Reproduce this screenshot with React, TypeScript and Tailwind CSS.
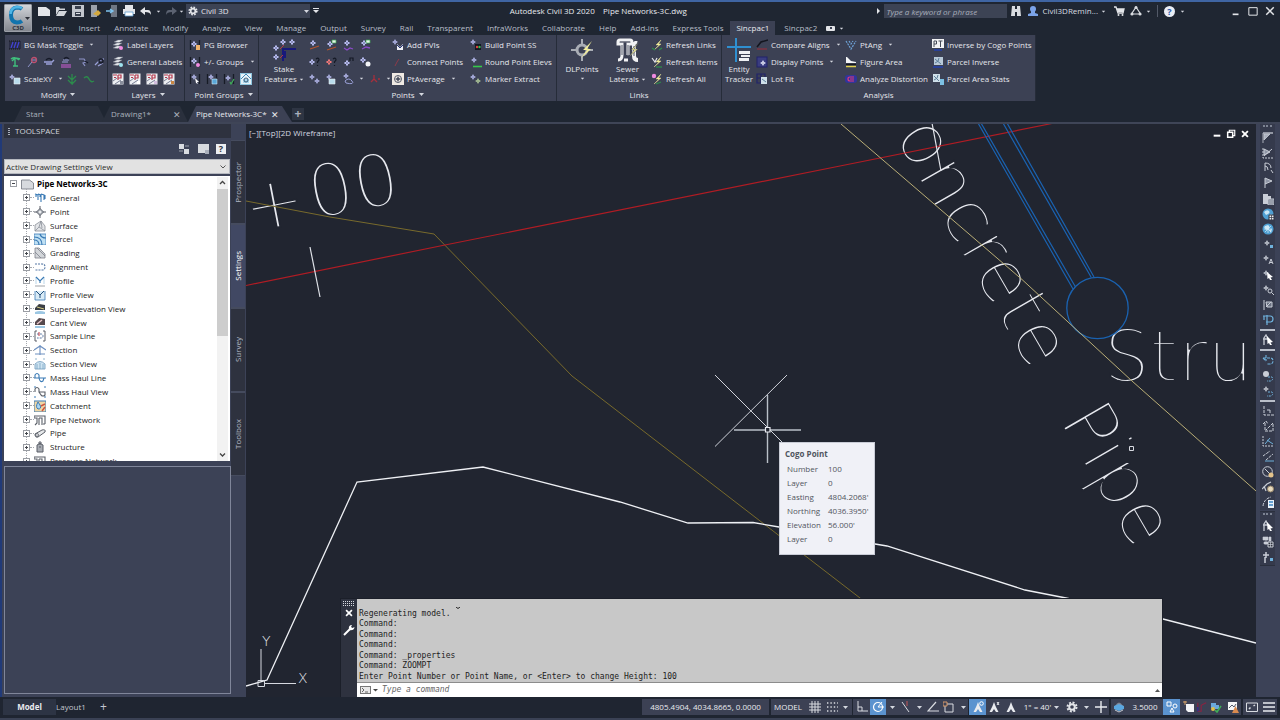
import type { ReactNode } from "react";

/* ---------- small drawing helpers ---------- */

function Icon({ children, className = "h-3 w-3" }: { children: ReactNode; className?: string }) {
  return (
    <svg viewBox="0 0 12 12" className={`shrink-0 ${className}`} fill="none" aria-hidden="true">
      {children}
    </svg>
  );
}

function Mark({ x, y, r = 2, c = "#b9bdf2" }: { x: number; y: number; r?: number; c?: string }) {
  return (
    <g stroke={c} strokeWidth="1">
      <path d={`M${x - r - 1} ${y}H${x + r + 1}M${x} ${y - r - 1}V${y + r + 1}`} />
      <path d={`M${x - r} ${y}L${x} ${y - r}L${x + r} ${y}L${x} ${y + r}Z`} fill={c} />
      <circle cx={x} cy={y} r={r / 3} fill="#3c4154" stroke="none" />
    </g>
  );
}

function Caret({ className = "" }: { className?: string }) {
  return (
    <svg viewBox="0 0 5 3" className={`h-[3px] w-[5px] shrink-0 ${className}`} aria-hidden="true">
      <path d="M0 0H5L2.5 3Z" fill="#d5d8e0" />
    </svg>
  );
}

const bolt = <path d="M10 1L5 6H8L3 11L10 5H7.500Z" fill="#f2ee9a" stroke="#f2ee9a" strokeWidth=".4" />;

/* ---------- ribbon ---------- */

type Item = { icon: ReactNode; label: string; menu?: boolean };

function RibbonButton({ icon, label, menu }: Item) {
  return (
    <button className="flex h-[17px] items-center gap-[3px] whitespace-nowrap">
      <Icon>{icon}</Icon>
      <span>{label}</span>
      {menu && <Caret className="ml-[3px] scale-75" />}
    </button>
  );
}

function IconButton({ label, children, className = "w-[17px]" }: { label: string; children: ReactNode; className?: string }) {
  return (
    <button aria-label={label} className={`flex h-[17px] items-center ${className}`}>
      <Icon>{children}</Icon>
    </button>
  );
}

function Column({ items, className = "" }: { items: Item[]; className?: string }) {
  return (
    <div className={`flex flex-col ${className}`}>
      {items.map((i) => (
        <RibbonButton key={i.label} {...i} />
      ))}
    </div>
  );
}

function Panel({ title, menu, className, children }: { title: string; menu?: boolean; className: string; children: ReactNode }) {
  return (
    <section className={`flex shrink-0 flex-col border-r border-[#262c39] bg-[#3c4154] ${className}`}>
      <div className="flex h-[53px] pt-[1px]">{children}</div>
      <button className="flex h-[13px] items-center justify-center gap-1">
        {title}
        {menu && <Caret />}
      </button>
    </section>
  );
}

function BigButton({ icon, lines, menu, className }: { icon: ReactNode; lines: string[]; menu?: boolean; className: string }) {
  return (
    <button className={`flex flex-col items-center pt-[2px] leading-[10px] ${className}`}>
      <svg viewBox="0 0 24 24" className="mb-[2px] h-6 w-6" fill="none" aria-hidden="true">
        {icon}
      </svg>
      {lines.map((l, i) => (
        <span key={l} className="flex items-center gap-[2px] whitespace-nowrap">
          {l}
          {menu && i === lines.length - 1 && lines.length > 1 && <Caret className="scale-75" />}
        </span>
      ))}
      {menu && lines.length === 1 && <Caret className="mt-[3px] scale-75" />}
    </button>
  );
}

const layerStack = (
  <path d="M2 3L6 1H11L7 3.500ZM1 6L5 4H10L6 6.500ZM1 9L5 7H9L6 9.500Z" fill="#e6e8ec" stroke="#7b8291" strokeWidth=".4" />
);

const layerSquare = (accent: string, corner: string) => (
  <>
    <rect x=".5" y=".5" width="11" height="11" fill="#eceef2" />
    <path d="M1 2H5M2 4.500H4M6 2V7M6 2H9V5H6" stroke={accent} strokeWidth="1.200" />
    <path d="M1 8L5 5M3 11L9 7" stroke="#59617a" strokeWidth=".8" />
    <path d="M8 8H11V11H8Z" fill={corner} />
  </>
);

const brackets = <path d="M1.500 1V11M10.500 1V11" stroke="#171b26" strokeWidth="1.300" />;

const modifyTools: [string, ReactNode][] = [
  ["Palm", <path key="a" d="M2 3Q6 0 10 4M3 5Q6 1 11 3M6 3V10M4 10H9" stroke="#3fbf7c" strokeWidth="1.400" />],
  ["Leader", <g key="a"><circle cx="8" cy="4" r="2.500" stroke="#c0506f" strokeWidth="1.300" /><path d="M6 6L2 11M6 4H10" stroke="#8d93c8" /></g>],
  ["Flip", <g key="a"><path d="M1 6H9L11 4M3 8H9" stroke="#9aa0d8" strokeWidth="1.300" /><path d="M3 4Q6 1 9 4" stroke="#161a28" strokeWidth="1.500" /></g>],
  ["Stack", <g key="a"><path d="M3 4H9M2 6H8" stroke="#9aa0d8" /><path d="M4 3Q6 0 9 3" stroke="#161a28" strokeWidth="1.500" /><path d="M1 9H11M1 11H11" stroke="#d05fd8" strokeWidth="1.200" /></g>],
  ["Shift", <g key="a"><path d="M2 3H7L9 6L6 7L8 10" stroke="#8d93c8" strokeWidth="1.200" /><path d="M8 5L11 7" stroke="#161a28" strokeWidth="1.500" /></g>],
  ["Rotate", <g key="a"><path d="M1 9L6 4L10 3M4 10L9 7" stroke="#9aa0d8" strokeWidth="1.300" /><circle cx="7" cy="5" r="2" stroke="#161a28" strokeWidth="1.300" /></g>],
];

const pointTools: [string, ReactNode][] = [
  ["Point on line", <g key="a"><Mark x={5} y={4} /><path d="M2 10L11 7" stroke="#b4552d" strokeWidth="1.300" /></g>],
  ["Point on layer", <g key="a"><Mark x={5} y={5} /><path d="M2 11L11 8" stroke="#b4552d" strokeWidth="1.300" /><path d="M7 1H11V4H7Z" fill="#e7f4e8" stroke="#3fae58" strokeWidth=".7" /></g>],
  ["Point offset", <g key="a"><Mark x={5} y={4} /><path d="M2 9L5 11L8 9L11 10" stroke="#8c4bc9" strokeWidth="1.300" /></g>],
  ["Point label", <g key="a"><Mark x={5} y={4} /><path d="M3 10L7 8L11 9" stroke="#8c4bc9" strokeWidth="1.300" /><path d="M7 1H11V4H7Z" fill="#e7f4e8" stroke="#3fae58" strokeWidth=".7" /></g>],
  ["Query", <g key="a"><Mark x={4} y={6} /><path d="M8 3Q11 1 11 4L9.500 6V7M9.500 9V10" stroke="#151925" strokeWidth="1.200" /></g>],
  ["Query red", <g key="a"><Mark x={4} y={6} c="#f07878" /><path d="M8 3Q11 1 11 4L9.500 6V7M9.500 9V10" stroke="#151925" strokeWidth="1.200" /></g>],
  ["Number", <g key="a"><Mark x={5} y={7} /><path d="M8 5V2H11V5" stroke="#151925" strokeWidth="1.200" /></g>],
  ["Pair", <g key="a"><Mark x={4} y={4} /><circle cx="9" cy="8" r="2.500" fill="#f2f3f6" /></g>],
  ["Chain", <g key="a"><Mark x={4} y={4} r={1.5} /><Mark x={9} y={8} r={1.5} /></g>],
  ["Table", <g key="a"><Mark x={4} y={4} r={1.5} /><path d="M4 6H10V11H4Z" fill="#b9dcec" stroke="#e8eef2" strokeWidth=".6" /></g>],
  ["Group", <g key="a"><Mark x={4} y={3} r={1.5} /><path d="M3 8Q7 4 10 8T4 10Z" stroke="#9aa0d8" /></g>],
];

const Ribbon = () => (
  <div className="ml-[5px] flex h-[66px] text-[#e4e6eb]">
    <Panel title="Modify" menu className="w-[103px] pl-[4px]">
      <div className="flex flex-col">
        <RibbonButton label="BG Mask Toggle" menu icon={<><path d="M0 2H12V10H0Z" fill="#2a2e44" /><path d="M2 9L4 3M5 9L7 3M8 9L10 3" stroke="#4343d8" strokeWidth="1.200" /><path d="M0 2H12M0 10H12" stroke="#14161f" strokeDasharray="1 1" /></>} />
        <div className="flex">
          {modifyTools.map(([n, d]) => (
            <IconButton key={n} label={n}>{d}</IconButton>
          ))}
        </div>
        <div className="flex">
          <RibbonButton label="ScaleXY" menu icon={<><Mark x={3} y={4} r={1.5} /><path d="M5 5H11V11H5Z" fill="#b9dcec" stroke="#e8eef2" strokeWidth=".6" /></>} />
          <IconButton label="Branches" className="ml-[3px] w-[17px]"><path d="M6 1V11L2 7M6 11L10 7M6 7L2 3M6 7L10 3" stroke="#2c8b4c" strokeWidth="1.300" /></IconButton>
          <IconButton label="Smooth" className="w-3"><path d="M1 5Q4 2 6 6T11 8" stroke="#2c8b4c" strokeWidth="1.500" /></IconButton>
        </div>
      </div>
    </Panel>

    <Panel title="Layers" menu className="w-[77px] pl-[4px]">
      <div className="flex flex-col">
        <RibbonButton label="Label Layers" icon={<>{layerStack}<circle cx="9" cy="9" r="2" fill="#f08be0" /></>} />
        <RibbonButton label="General Labels" icon={<>{layerStack}<circle cx="9" cy="9" r="2" fill="#9fe3ef" /></>} />
        <div className="flex">
          <IconButton label="Layer freeze">{layerSquare("#b3364a", "#8a8f9d")}</IconButton>
          <IconButton label="Layer PT">{layerSquare("#b3364a", "#fff")}</IconButton>
          <IconButton label="Layer lock">{layerSquare("#b3364a", "#d3bfe0")}</IconButton>
          <IconButton label="Layer paint">{layerSquare("#b3364a", "#c98642")}</IconButton>
        </div>
      </div>
    </Panel>

    <Panel title="Point Groups" menu className="w-[74px] pl-[4px]">
      <div className="flex flex-col">
        <RibbonButton label="PG Browser" icon={<>{brackets}<Mark x={5} y={5} /><path d="M7 6H11V11H7Z" fill="#f1b36c" /></>} />
        <RibbonButton label="+/- Groups" menu icon={<>{brackets}<Mark x={5} y={5} /><circle cx="9" cy="9" r="2" fill="#f08be0" /></>} />
        <div className="flex">
          <IconButton label="Pick group">{brackets}<Mark x={5} y={4} r={1.5} /><path d="M6 5L10 9L8 9L9 11L7 10Z" fill="#fff" /></IconButton>
          <IconButton label="Group table">{brackets}<Mark x={5} y={4} r={1.5} /><path d="M6 6H11V11H6Z" fill="#5aa7d8" stroke="#cfe8f5" strokeWidth=".6" /></IconButton>
          <IconButton label="Group check">{brackets}<Mark x={5} y={5} r={1.5} /><path d="M7 9L8 11L11 6" stroke="#3fae58" strokeWidth="1.200" /></IconButton>
          <IconButton label="Group home"><rect x=".5" y=".5" width="11" height="11" fill="#e6f2f8" stroke="#8fc6e0" /><path d="M1 6L6 1L11 6" stroke="#3f86b4" /><path d="M3 6H9V10H3Z" fill="#a9d6ee" /><circle cx="6" cy="7" r="2" stroke="#2b4c66" strokeWidth=".9" /></IconButton>
        </div>
      </div>
    </Panel>

    <Panel title="Points" menu className="w-[298px]">
      <BigButton
        className="ml-[3px] w-[44px]"
        menu
        lines={["Stake", "Features"]}
        icon={<><path d="M11 23V11H24M13 13V20" stroke="#18197a" strokeWidth="2" /><Mark x={11} y={4} /><Mark x={20} y={4} /><Mark x={4} y={10} /><Mark x={4} y={19} /><path d="M8 11L12 7M8 20L11 17" stroke="#b3364a" /></>}
      />
      <div className="ml-[2px] grid w-[84px] grid-cols-[17px_17px_17px_17px] content-start">
        {pointTools.map(([n, d]) => (
          <IconButton key={n} label={n}>{d}</IconButton>
        ))}
        <div className="flex items-center gap-[5px]">
          <Caret className="scale-75" />
          <Icon><path d="M5 2V6M2 9L5 6L8 9M9 6H11" stroke="#a62f3c" strokeWidth="1.300" /></Icon>
          <Caret className="scale-75" />
        </div>
      </div>
      <Column
        className="w-[78px]"
        items={[
          { label: "Add PVIs", icon: <><Mark x={3} y={3} r={1.5} /><path d="M5 5L8 8L11 5V11H5Z" fill="#eef0f6" /><path d="M5 6L8 9L11 6" stroke="#26337a" /></> },
          { label: "Connect Points", icon: <><path d="M3 10L5 6L7 3" stroke="#8f3a48" strokeWidth="1" /></> },
          { label: "PtAverage", menu: true, icon: <><rect width="12" height="12" fill="#efe9e3" /><circle cx="6" cy="6" r="3.500" stroke="#555b6b" /><Mark x={6} y={6} r={1.5} c="#4c5160" /></> },
        ]}
      />
      <Column
        items={[
          { label: "Build Point SS", icon: <><Mark x={3} y={3} r={1.5} /><path d="M5 5H11V11H5Z" fill="#131722" /><circle cx="7" cy="8" r="1.200" fill="#e0453f" /><circle cx="9.500" cy="8" r="1.200" fill="#37c24e" /></> },
          { label: "Round Point Elevs", icon: <><Mark x={4} y={4} r={1.5} /><path d="M3 10.500H12" stroke="#35c84b" strokeWidth="1.600" /></> },
          { label: "Marker Extract", icon: <><Mark x={3} y={4} r={1.5} /><Mark x={8} y={8} r={1.5} c="#b5cf9f" /></> },
        ]}
      />
    </Panel>

    <Panel title="Links" className="w-[165px]">
      <BigButton
        className="ml-[3px] w-[44px]"
        menu
        lines={["DLPoints"]}
        icon={<><path d="M1 12H23M12 1V23" stroke="#a9adb5" strokeWidth="2" /><circle cx="12" cy="12" r="5" fill="#3c4154" stroke="#a9adb5" strokeWidth="3" /><path d="M22 3L13 12H17L11 20L21 11H17Z" fill="#f2ee9a" /></>}
      />
      <BigButton
        className="w-[47px]"
        menu
        lines={["Sewer", "Laterals"]}
        icon={<><path d="M2 4Q2 2 4 2H14Q16 2 16 4V6H12V17M2 4V6H6V17Q6 22 2 22M8 22H12M16 6Q20 6 20 3" stroke="#f1f2f4" strokeWidth="3" /><path d="M18 7V18Q18 22 22 22" stroke="#f1f2f4" strokeWidth="4" /><path d="M4 4H14M6 7V17M12 7V18M18 8V18" stroke="#6e737f" strokeWidth="1.200" /><path d="M23 4L15 12H18L13 19L22 11H18Z" fill="#f2ee9a" stroke="#3c4154" strokeWidth=".5" /></>}
      />
      <Column
        items={[
          { label: "Refresh Links", icon: <>{bolt}<path d="M1 9L4 11M8 11L11 9" stroke="#2c8b4c" strokeWidth="1.300" /></> },
          { label: "Refresh Items", icon: <>{bolt}<path d="M1 2L4 6L6 2" stroke="#e6e8ec" strokeWidth="1.200" /><path d="M5 11H11" stroke="#2c8b4c" strokeWidth="1.300" /></> },
          { label: "Refresh All", icon: <>{bolt}<circle cx="3" cy="3" r="2.200" fill="#f08be0" /><path d="M5 11L10 9" stroke="#2c8b4c" strokeWidth="1.300" /></> },
        ]}
      />
    </Panel>

    <Panel title="Analysis" className="w-[314px]">
      <BigButton
        className="w-[34px]"
        lines={["Entity", "Tracker"]}
        icon={<><path d="M0 9H24M9 0V24" stroke="#2f8fd0" strokeWidth="2" /><path d="M12 12H23V24H12Z" fill="#3c4154" /><path d="M12 13H23V16H12ZM14 17H23V19H14ZM12 20H22V23H12Z" fill="#eef0f3" /></>}
      />
      <Column
        className="w-[89px]"
        items={[
          { label: "Compare Aligns", menu: true, icon: <><path d="M1 8L5 3L12 1" stroke="#14161f" strokeWidth="1.600" /><path d="M1 10H11" stroke="#7a3443" strokeWidth="1.600" /></> },
          { label: "Display Points", menu: true, icon: <><rect x="1" y="1" width="10" height="10" fill="#3a3d80" stroke="#20236a" /><Mark x={7} y={7} r={1.5} c="#e8eaff" /></> },
          { label: "Lot Fit", icon: <><path d="M1 1H9V10H1ZM1 5H9M5 1V10" stroke="#20236a" strokeWidth="1.200" /><path d="M5 4H11V11H5Z" fill="#cfe0ea" /><path d="M6 6L10 9" stroke="#5c7f99" /></> },
        ]}
      />
      <Column
        className="w-[87px]"
        items={[
          { label: "PtAng", menu: true, icon: <path d="M1 2L6 10L11 2M4 2L6 5L8 2" stroke="#6ea3d8" strokeWidth="1.200" strokeDasharray="2 1" /> },
          { label: "Figure Area", icon: <><path d="M2 1L6 5L11 6V7H1V1Z" fill="#f4f5f7" /><path d="M1 8.500H11" stroke="#14161f" strokeWidth="1.500" /><path d="M1 10.500H11" stroke="#e3d34f" strokeWidth="1.500" /></> },
          { label: "Analyze Distortion", icon: <><rect x="0" y="2" width="12" height="8" rx="3" fill="#31349c" /><path d="M9 4H5Q3 4 3 6T5 8H9M5 6H9" stroke="#e0387c" strokeWidth="1.200" /></> },
        ]}
      />
      <Column
        items={[
          { label: "Inverse by Cogo Points", icon: <><rect y="0" width="12" height="9" fill="#f2f3f5" /><path d="M2 8V2H4.500V5H2M6.500 2H10.500M8.500 2V8" stroke="#444a58" /><path d="M2 11H10" stroke="#2440a8" strokeWidth="1.600" /></> },
          { label: "Parcel Inverse", icon: <><rect x="2" y="1" width="9" height="8" fill="#b8c9d8" /><path d="M3 3L9 8M3 7Q7 6 7 2" stroke="#5c7f99" /><path d="M1 11H11" stroke="#2440a8" strokeWidth="1.600" /></> },
          { label: "Parcel Area Stats", icon: <><rect x="1" y="1" width="7" height="8" fill="#cfe0ea" /><path d="M2 3L7 8M2 7Q6 6 6 2" stroke="#5c7f99" /><rect x="8" y="6" width="4" height="6" fill="#7cc0e4" /></> },
        ]}
      />
    </Panel>
  </div>
);

/* ---------- title bar and menu ---------- */

const quickAccess: [string, ReactNode][] = [
  ["New", <path key="a" d="M0 2H8L12 5V11H0Z" fill="#e3e5e9" />],
  ["Open", <path key="a" d="M1 2H4L5 3.500H10V5H4L1 10ZM4 6H12L9 11H1Z" fill="#d3d6db" />],
  ["Save", <g key="a"><path d="M0 0H12V12H0Z" fill="#c3c7ce" /><path d="M3 1H9V4H3ZM3 7H9V11H3Z" fill="#39404e" /><path d="M4 8.500H8" stroke="#dfe2e6" /></g>],
  ["Save as", <g key="a"><path d="M2 0H8V12H2Z" fill="#9ba1ab" /><path d="M4 9L9 5L12 8L9 11Z" fill="#d4a93f" /></g>],
  ["Export", <g key="a"><path d="M5 0H11V12H5Z" fill="#6f7784" /><path d="M0 6H6M4 4L7 6L4 8" stroke="#7fc4ef" strokeWidth="1.400" /></g>],
  ["Plot", <g key="a"><path d="M2 0H10V4H2ZM0 4H12V9H0Z" fill="#e3e5e9" /><path d="M2 7H10V11H2Z" fill="#fff" stroke="#5f9fd0" strokeWidth=".8" /></g>],
];

const menuTabs = ["Home", "Insert", "Annotate", "Modify", "Analyze", "View", "Manage", "Output", "Survey", "Rail", "Transparent", "InfraWorks", "Collaborate", "Help", "Add-ins", "Express Tools", "Sincpac1", "Sincpac2"];

const Gear = ({ className = "h-3 w-3" }: { className?: string }) => (
  <Icon className={className}>
    <circle cx="6" cy="6" r="4.500" stroke="#e3e5e9" strokeWidth="2" strokeDasharray="2 1.530" />
    <circle cx="6" cy="6" r="2.800" stroke="#e3e5e9" strokeWidth="2" />
  </Icon>
);

const Header = () => (
  <header className="flex h-[33px] shrink-0 pl-1">
    <button aria-label="Application menu" className="mt-[2px] flex h-7 w-7 shrink-0 flex-col items-center justify-between rounded-[1px] border border-[#9a9ea6] bg-linear-to-b from-[#d2d5da] to-[#83878f]">
      <svg viewBox="0 0 26 20" className="h-5 w-[26px]" fill="none" aria-hidden="true">
        <path d="M17 4Q15 2.500 12 2.500Q6 3 6 10Q6 17 12 17.500Q15 17.500 17 16" stroke="#1274ad" strokeWidth="4" />
        <path d="M17 3Q15 2 12 2Q6 2.500 5.500 9" stroke="#4fb6e6" strokeWidth="2.500" />
        <path d="M20 12H25L22.500 15Z" fill="#2b2f38" />
      </svg>
      <span className="text-[6px] leading-[6px] font-bold text-[#2b2f38]">C3D</span>
    </button>
    <div className="flex min-w-0 flex-1 flex-col">
      <div className="flex h-[18px] items-center">
        <div className="flex w-[122px] shrink-0 items-center gap-[5px] pl-[6px]">
          {quickAccess.map(([n, d]) => (
            <button key={n} aria-label={n}><Icon>{d}</Icon></button>
          ))}
          <button aria-label="Undo"><Icon><path d="M0 6L5 2V5H8Q11 5 11 10Q10 7 5 7V10Z" fill="#e3e5e9" /></Icon></button>
        </div>
        <Caret className="mx-[2px] scale-75" />
        <button aria-label="Redo" className="ml-[2px]"><Icon><path d="M12 6L7 2V5H4Q1 5 1 10Q2 7 7 7V10Z" fill="#5b6271" /></Icon></button>
        <Caret className="mx-[2px] scale-75" />
        <label className="relative flex h-[14px] w-[124px] shrink-0 items-center bg-[#3c4354]">
          <Gear className="ml-[2px] h-[10px] w-[10px]" />
          <select aria-label="Workspace" className="h-full min-w-0 flex-1 appearance-none pl-[3px] text-[#e4e6eb]">
            <option>Civil 3D</option>
          </select>
          <Caret className="mr-[1px]" />
        </label>
        <svg viewBox="0 0 6 6" className="ml-[3px] h-[6px] w-[6px]" aria-hidden="true"><path d="M0 0H6V1H0ZM0 2H6L3 5Z" fill="#e3e5e9" /></svg>
        <h1 className="min-w-0 flex-1 text-center whitespace-pre text-[#e9ebef]">{"Autodesk Civil 3D 2020    Pipe Networks-3C.dwg"}</h1>
        <div className="flex shrink-0 items-center">
          <svg viewBox="0 0 3 6" className="mr-1 h-[6px] w-[3px]" aria-hidden="true"><path d="M0 0V6L3 3Z" fill="#e3e5e9" /></svg>
          <input aria-label="Search" placeholder="Type a keyword or phrase" className="h-[14px] w-[123px] bg-[#3c4354] px-[2px] italic placeholder:text-[#a9afbc]" />
          <button aria-label="Find" className="ml-[3px]"><Icon><path d="M2 1H5V4H7V1H10L11 11H7V7H5V11H1Z" fill="#d9dce1" /></Icon></button>
          <button className="ml-[5px] flex items-center gap-[3px]">
            <Icon><circle cx="6" cy="4" r="3" fill="#7ba3e8" /><path d="M4 5H8V8L11 9V11H1V9L4 8Z" fill="#7ba3e8" /></Icon>
            Civil3DRemin...
            <Caret className="scale-75" />
          </button>
          <button aria-label="Store" className="ml-[7px]"><Icon><path d="M1 2H3L5 8H10L11 4H4" stroke="#e3e5e9" strokeWidth="1.300" /><path d="M4 4H11L10 7H5Z" fill="#e3e5e9" /><circle cx="5.500" cy="10" r="1" fill="#e3e5e9" /><circle cx="9.500" cy="10" r="1" fill="#e3e5e9" /></Icon></button>
          <button className="ml-[5px] flex items-center gap-1" aria-label="Apps"><Icon><path d="M6 2L10.500 9H1.500Z" stroke="#d9dce1" strokeWidth="1.200" /><circle cx="6" cy="2.500" r="1.500" fill="#d9dce1" /><circle cx="2" cy="9" r="1.500" fill="#d9dce1" /><circle cx="10" cy="9" r="1.500" fill="#d9dce1" /></Icon><Caret className="scale-75" /></button>
          <span className="mx-[6px] h-3 w-px bg-[#525968]" />
          <button aria-label="Help" className="flex items-center gap-[5px]"><span className="flex h-[11px] w-[11px] items-center justify-center rounded-full bg-[#e9edf5] text-[9px] leading-none font-bold text-[#2857a8]">?</span><Caret className="scale-75" /></button>
        </div>
        <div className="ml-[46px] flex shrink-0 items-center gap-[7px] pr-[5px]">
          <button aria-label="Minimize"><Icon className="h-[10px] w-[10px]"><path d="M2 10H9" stroke="#e3e5e9" strokeWidth="2" /></Icon></button>
          <button aria-label="Maximize"><Icon className="h-[10px] w-[10px]"><path d="M1 2H11V11H1Z" stroke="#e3e5e9" strokeWidth="1.200" /></Icon></button>
          <button aria-label="Close"><Icon className="h-[10px] w-[10px]"><path d="M1.500 1.500L10.500 10.500M10.500 1.500L1.500 10.500" stroke="#e3e5e9" strokeWidth="1.800" /></Icon></button>
        </div>
      </div>
      <nav className="flex h-[15px] items-end pl-[3px] text-[#b9bec9]">
        {menuTabs.map((t) => (
          <a key={t} href="#" className={`flex h-[14px] items-center whitespace-nowrap ${t === "Sincpac1" ? "bg-[#3c4154] px-[6px] text-[#e9ebef]" : t === "Sincpac2" ? "px-[9px]" : "px-[7px]"}`}>
            {t}
          </a>
        ))}
        <button aria-label="Ribbon options" className="flex h-[14px] items-center gap-1"><span className="flex h-[5px] w-[9px] items-center justify-center rounded-[1px] bg-[#e3e5e9]"><span className="h-[2px] w-[2px] bg-[#3c4154]" /></span><Caret className="scale-75" /></button>
      </nav>
    </div>
  </header>
);

const FileTabs = () => (
  <div className="flex h-[21px] shrink-0 items-end pl-[14px] text-[#aab0bc]">
    <a href="#" className="flex h-4 w-[92px] items-center bg-[#2a303d] pl-[12px] [clip-path:polygon(8px_0,84px_0,92px_100%,0_100%)]">Start</a>
    <div className="-ml-[4px] flex h-4 w-[86px] items-center justify-between bg-[#2a303d] pr-2 pl-[9px] [clip-path:polygon(8px_0,78px_0,86px_100%,0_100%)]">
      <a href="#">Drawing1*</a>
      <button aria-label="Close Drawing1" className="-mr-[1px] text-[9px] leading-none">✕</button>
    </div>
    <div className="flex h-4 w-[104px] items-center justify-between bg-[#3c4154] pr-[14px] pl-2 text-[#e9ebef] [clip-path:polygon(8px_0,94px_0,104px_100%,0_100%)]">
      <a href="#">Pipe Networks-3C*</a>
      <button aria-label="Close Pipe Networks-3C" className="-mr-[1px] text-[9px] leading-none">✕</button>
    </div>
    <button aria-label="New drawing" className="mb-[2px] flex h-3 w-3 items-center justify-center bg-[#2e3543] text-[12px] leading-none font-bold">+</button>
  </div>
);

/* ---------- toolspace ---------- */

const g = "#5a5f68";
const b = "#3a7ab5";
const tree: [string, ReactNode][] = [
  ["General", <path key="a" d="M1 2L4 3V8M4 2L7 3V10M7 2L10 3V8M2 5V3M6 5V3M11 3V7" stroke={b} strokeWidth="1.100" />],
  ["Point", <g key="a"><path d="M6 0V12M0 6H12" stroke={g} /><path d="M6 2.500L9.500 6L6 9.500L2.500 6Z" fill="#b7bbc2" stroke={g} /><circle cx="6" cy="6" r="1" fill="#fff" /></g>],
  ["Surface", <path key="a" d="M1 5L7 1L11 6V11H1ZM7 1L5 7L1 11M5 7L11 11M7 1L8 8" fill="#e3e5e8" stroke="#8a8f98" strokeWidth=".8" />],
  ["Parcel", <g key="a"><path d="M0 1H12V12H0Z" fill="#bfe0f3" stroke={b} strokeWidth=".8" /><path d="M0 4Q8 4 8 12M0 7Q5 7 5 12M12 5Q7 5 6 1" stroke={b} strokeWidth="1.200" /></g>],
  ["Grading", <path key="a" d="M1 1L5 1L11 7V11H1ZM1 5L7 11M3 1L11 9" fill="#d3d6da" stroke="#7d828b" strokeWidth=".8" />],
  ["Alignment", <path key="a" d="M1 3H8Q11 3 11 6T8 9H1" stroke="#5679a5" strokeWidth="1.100" strokeDasharray="2 1" />],
  ["Profile", <g key="a"><path d="M1 11H11" stroke="#a0a4aa" /><path d="M2 2V9M10 2V9" stroke="#b9d6ea" /><path d="M2 2L6 6L10 2M6 6V8" stroke={b} strokeWidth="1.200" /></g>],
  ["Profile View", <g key="a"><path d="M1 2V11H11V2" fill="#d9ebf6" stroke={b} strokeWidth=".8" /><path d="M2 2L6 6L10 2M6 6V9" stroke="#23507c" /></g>],
  ["Superelevation View", <g key="a"><path d="M1 5L5 1L11 2V7H1Z" fill="#3b3f45" /><path d="M1 9Q6 7 11 9V11H1Z" fill="#9cc7e3" /><path d="M3 4L10 6" stroke="#d6cd84" /></g>],
  ["Cant View", <g key="a"><path d="M1 5L5 1L11 2V8H1Z" fill="#55494d" /><path d="M3 7L8 3" stroke="#eac8cb" strokeWidth="1.400" /><path d="M1 10H11" stroke="#9cc7e3" strokeWidth="2" /></g>],
  ["Sample Line", <g key="a"><path d="M3 1H1V11H3M9 1H11V11H9" stroke={g} /><path d="M3 4H7Q9 4 9 6T7 8H3" stroke="#5a78a4" strokeDasharray="2 1" /><path d="M5 2V6" stroke="#c23b46" /></g>],
  ["Section", <path key="a" d="M0 6L6 2L12 6M6 1V11M1 10H11" stroke="#6c8fc0" strokeWidth="1.100" />],
  ["Section View", <g key="a"><path d="M1 11V6Q6 1 11 6V11Z" fill="#cfe4f2" stroke="#7aa3c2" strokeWidth=".9" /><path d="M1 1H3M9 1H11M3 11V6M6 11V5M9 11V6" stroke="#7aa3c2" strokeWidth=".8" /></g>],
  ["Mass Haul Line", <path key="a" d="M0 6H12M1 6V3Q3 0 5 3V6Q6 11 9 9L10 6" stroke={b} strokeWidth="1.100" />],
  ["Mass Haul View", <g key="a"><path d="M0 1H2M10 1H12M0 11H2M10 11H12" stroke={b} /><path d="M1 6V3Q3 0 5 3V6H11V9Q9 11 7 9L5 6" stroke={g} strokeWidth="1.100" /></g>],
  ["Catchment", <g key="a"><path d="M0 1H12V12H0Z" fill="#f0d7a5" stroke={b} /><path d="M4 2Q1 7 4 9Q8 9 6 5Z" fill="#a9d6f3" stroke={b} /><path d="M7 6L11 4M8 11L11 7" stroke="#cf5640" strokeWidth="1.500" /></g>],
  ["Pipe Network", <path key="a" d="M0 2H11V10M0 2V4H3V9L1 11M5 4V11M5 4H8V11M11 10H9" stroke={g} strokeWidth="1.100" />],
  ["Pipe", <g key="a"><path d="M1 7L8 3Q12 2 11 5L4 10Q1 11 1 7Z" fill="#e6e8ea" stroke={g} /><circle cx="3" cy="8" r="1.500" stroke={g} strokeWidth=".8" /></g>],
  ["Structure", <g key="a"><path d="M3 4Q6 1 9 4V11H3Z" fill="#a7abb2" stroke={g} /><path d="M5 1H7V3H5ZM5 6H7" stroke={g} /></g>],
  ["Pressure Network", <path key="a" d="M0 2H11V10M0 2V4H3V9M5 4V11M5 4H8V11" stroke={g} strokeWidth="1.100" />],
];

const Expander = ({ open }: { open?: boolean }) => (
  <svg viewBox="0 0 7 7" className="h-[7px] w-[7px] shrink-0" fill="none" aria-hidden="true">
    <rect x=".5" y=".5" width="6" height="6" fill="#fff" stroke="#9a9da3" />
    <path d={open ? "M2 3.500H5" : "M2 3.500H5M3.500 2V5"} stroke="#44474d" />
  </svg>
);

const Toolspace = () => (
  <aside className="flex w-[242px] shrink-0 bg-[#3c4257]">
    <div className="flex min-w-0 flex-1 flex-col pb-[3px]">
      <div className="flex h-[14px] w-[227px] shrink-0 items-center gap-[5px] bg-[#2e323f] pl-[4px] text-[#d3d6dd]">
        <svg viewBox="0 0 2 7" className="h-[7px] w-[2px]" fill="none" aria-hidden="true"><path d="M1 0V7" stroke="#aab0bc" strokeWidth="2" strokeDasharray="1 1" /></svg>
        TOOLSPACE
      </div>
      <div className="flex h-[21px] shrink-0 items-center justify-end gap-[7px] pr-[5px]">
        <button aria-label="Panorama"><Icon><path d="M1 1H6V6H1ZM6 6H11V11H6Z" fill="#d9dce1" /><path d="M1 8H5M7 3H11" stroke="#9aa0ac" /></Icon></button>
        <button aria-label="Preview"><Icon><path d="M1 1H12V10H1Z" fill="#d9dce1" /><path d="M8 7H12V11H8Z" fill="#aab0bc" /></Icon></button>
        <button aria-label="Toolspace help" className="flex h-[10px] w-[10px] items-center justify-center bg-[#eceef2] text-[9px] leading-none font-bold text-[#2b2f38]">?</button>
      </div>
      <label className="mb-[2px] flex h-[15px] w-[226px] shrink-0 items-center border border-[#b5b8bf] bg-[#e2e2e2] text-[#2c2c2c]">
        <select aria-label="Settings view" className="h-full min-w-0 flex-1 appearance-none pl-px">
          <option>Active Drawing Settings View</option>
        </select>
        <svg viewBox="0 0 6 4" className="mr-[3px] h-1 w-[6px]" fill="none" aria-hidden="true"><path d="M.5 .5L3 3L5.500 .5" stroke="#555" /></svg>
      </label>
      <div className="flex h-[285px] w-[226px] shrink-0 overflow-hidden bg-white pt-px text-[#222]">
        <ul className="relative flex h-[291px] min-w-0 flex-1 flex-col pl-[6px] before:absolute before:top-3 before:bottom-0 before:left-[22px] before:border-l before:border-dotted before:border-[#a5a8ae]">
          <li className="flex flex-1 items-center font-bold text-black">
            <Expander open />
            <Icon className="mr-[3px] ml-[4px] h-3 w-[13px]"><path d="M0 2H8L12 5V11H0Z" fill="#d7dade" stroke="#70757d" strokeWidth=".8" /></Icon>
            Pipe Networks-3C
          </li>
          {tree.map(([n, d]) => (
            <li key={n} className="relative flex flex-1 items-center pl-[13px] whitespace-nowrap">
              <Expander />
              <span className="w-[4px] border-t border-dotted border-[#a5a8ae]" />
              <Icon className="mr-[4px] h-3 w-3">{d}</Icon>
              {n}
            </li>
          ))}
        </ul>
        <div className="mr-[2px] flex w-[11px] flex-col items-center bg-[#f2f2f2]">
          <svg viewBox="0 0 11 12" className="h-3 w-[11px] shrink-0" fill="none" aria-hidden="true"><path d="M3 7L5.500 4.500L8 7" stroke="#444" strokeWidth="1.300" /></svg>
          <div className="h-[147px] w-full bg-[#cdcdcd]" />
          <div className="flex-1" />
          <svg viewBox="0 0 11 12" className="h-3 w-[11px] shrink-0" fill="none" aria-hidden="true"><path d="M3 4.500L5.500 7L8 4.500" stroke="#444" strokeWidth="1.300" /></svg>
        </div>
      </div>
      <div className="mt-[5px] w-[227px] flex-1 border border-[#80869a] bg-[#3c4256]" />
    </div>
    <div className="flex w-[15px] shrink-0 flex-col pt-4 text-[#b0b5c1]">
      {["Prospector", "Settings", "Survey", "Toolbox"].map((t) => (
        <button key={t} className={`flex h-[84px] w-[14px] items-center justify-center border-y border-[#454b5e] ${t === "Settings" ? "bg-[#414863] text-white" : "bg-[#2e323f]"}`}>
          <span className="rotate-180 [writing-mode:vertical-rl]">{t}</span>
        </button>
      ))}
    </div>
  </aside>
);

/* ---------- drawing canvas ---------- */

const history = ["Regenerating model.", "Command:", "Command:", "Command:", "Command: _properties", "Command: ZOOMPT", "Enter Point Number or Point Name, or <Enter> to change Height: 100"];

const cogo = [["Number", "100"], ["Layer", "0"], ["Easting", "4804.2068'"], ["Northing", "4036.3950'"], ["Elevation", "56.000'"], ["Layer", "0"]];

const Canvas = () => (
  <main className="relative min-w-0 flex-1 overflow-hidden bg-[#212530]">
    <svg viewBox="246 124 1010 573" preserveAspectRatio="xMinYMin slice" className="absolute inset-0 h-full w-full" fill="none" aria-hidden="true">
      <g className="font-['DejaVu_Sans_Light','DejaVu_Sans',sans-serif] text-[72px] font-extralight" fill="#e6e8ee" stroke="#212530" strokeWidth="1.800">
        <text x="1104" y="381">Stru</text>
        <text transform="translate(894 135) rotate(60)">oncrete</text>
        <text transform="translate(1059 420) rotate(60)">Pipe</text>
        <text transform="translate(249 233) rotate(-11)">+</text>
        <text transform="translate(313 219) rotate(-11)">00</text>
      </g>
      <path d="M246 201L330 217L434 234L572 376L860 598L900 629" stroke="#786a2c" />
      <path d="M246 285.500L445 245L840 166L1052 123.500" stroke="#b01c24" strokeWidth="1.200" />
      <path d="M978 123L1073 289M981 123L1075.500 287M1003 123L1091 277M1007 123L1094 277" stroke="#1a62b0" strokeWidth="1.200" />
      <circle cx="1097.500" cy="308" r="30.700" stroke="#1a62b0" strokeWidth="1.300" />
      <path d="M841 124L1022 279.500L1132 381L1256 491" stroke="#b9ad76" />
      <path d="M246 686L267 680L357 482L483 467L620 502L688 523L753 522.500L779 527L875 544L887 546L1025 590L1066 598L1163 619L1256 643" stroke="#eef0f4" strokeWidth="1.300" />
      <path d="M310 247L320 297M932 123L941 171" stroke="#dfe2e8" strokeWidth="1.200" />
      <path d="M715 375L782 442M715 446.500L787 375" stroke="#cfd2da" />
      <path d="M767.500 395V463M734 430H801" stroke="#b9c0c8" strokeWidth="1.400" />
      <path d="M765.500 427.500H770V432H765.500Z" fill="#212530" stroke="#e6e8ee" strokeWidth="1.200" />
      <path d="M1129.500 446.500H1133.500V450.500H1129.500Z" stroke="#d6d9e0" />
      <path d="M261 649V680M264.500 683.500H296M258 680.500H264.500V686.500H258Z" stroke="#d6d9e0" />
      <g className="font-['DejaVu_Sans_Light','DejaVu_Sans',sans-serif] text-[14px] font-extralight" fill="#e6e8ee">
        <text x="262" y="646">Y</text>
        <text x="298" y="683">X</text>
      </g>
    </svg>

    <p className="absolute top-[3px] left-[3px] text-[#d6d9e0]">[−][Top][2D Wireframe]</p>
    <div className="absolute top-[5px] right-[6px] flex gap-1">
      <button aria-label="Minimize drawing"><Icon className="h-[10px] w-[10px]"><path d="M2 8H10" stroke="#fff" strokeWidth="2.400" /></Icon></button>
      <button aria-label="Restore drawing"><Icon className="h-[10px] w-[10px]"><path d="M4 4V1.500H10.500V8H8" stroke="#fff" strokeWidth="1.400" /><path d="M2 4H8V10H2Z" stroke="#fff" strokeWidth="1.800" /></Icon></button>
      <button aria-label="Close drawing"><Icon className="h-[10px] w-[10px]"><path d="M2.500 2.500L9.500 9.500M9.500 2.500L2.500 9.500" stroke="#fff" strokeWidth="2.200" /></Icon></button>
    </div>

    <div role="tooltip" className="absolute top-[318px] left-[533px] w-24 border border-[#c9ccd6] bg-[#f0f1f7] px-[5px] pt-[4px] pb-2 text-[#505560]">
      <p className="mb-px leading-[14px] font-bold">Cogo Point</p>
      <dl className="grid grid-cols-[41px_1fr] pl-[2px] leading-[14px]">
        {cogo.map(([k, v], i) => (
          <div key={i} className="contents">
            <dt>{k}</dt>
            <dd>{v}</dd>
          </div>
        ))}
      </dl>
    </div>

    <div className="absolute right-[93px] bottom-0 left-[94px] flex h-[99px] border border-b-0 border-[#1b1f29]">
      <div className="flex w-4 shrink-0 flex-col items-center bg-[#2e323f] pt-[2px]">
        <svg viewBox="0 0 12 5" className="h-[5px] w-3 shrink-0" fill="none" aria-hidden="true"><path d="M0 .5H12M0 2.500H12M0 4.500H12" stroke="#d6d9e0" strokeDasharray="1 1" /></svg>
        <button aria-label="Close command line" className="mt-[2px] flex"><Icon className="h-[10px] w-[10px]"><path d="M2.500 2.500L9.500 9.500M9.500 2.500L2.500 9.500" stroke="#fff" strokeWidth="2" /></Icon></button>
        <button aria-label="Customize" className="mt-[6px] flex"><Icon className="h-3 w-3"><path d="M1 11L6.500 5.500" stroke="#fff" strokeWidth="2" /><path d="M6 6Q5 1 9 1L8 3L9.500 4L11.500 3Q11 7 6 6Z" fill="#fff" /></Icon></button>
      </div>
      <div className="flex min-w-0 flex-1 flex-col font-['DejaVu_Sans_Mono',monospace] text-[#1d1d1d]">
        <div className="relative flex flex-1 flex-col justify-end overflow-hidden border-b border-[#8c8c8c] bg-[#c8c8c8] pl-[2px]">
          <svg viewBox="0 0 4 2" className="absolute top-2 left-[99px] h-[2px] w-1" fill="none" aria-hidden="true"><path d="M0 0Q2 3 4 0" stroke="#222" /></svg>
          <div className="flex h-[73px] shrink-0 flex-col">
            {history.map((l, i) => (
              <p key={i} className="flex-1 leading-[10px] whitespace-pre">{l}</p>
            ))}
          </div>
        </div>
        <label className="flex h-[14px] items-center bg-white pl-[3px]">
          <svg viewBox="0 0 18 8" className="h-2 w-[18px]" fill="none" aria-hidden="true"><rect x=".5" y=".5" width="10" height="7" fill="#e9e9e9" stroke="#777" /><path d="M2 2L4 4L2 6M5 6H8" stroke="#444" strokeWidth=".8" /><path d="M13 3H18L15.500 5.500Z" fill="#444" /></svg>
          <input aria-label="Command" placeholder="Type a command" className="min-w-0 flex-1 pl-1 italic placeholder:text-[#666]" />
          <svg viewBox="0 0 5 3" className="mr-[2px] h-[3px] w-[5px]" aria-hidden="true"><path d="M0 3H5L2.500 0Z" fill="#555" /></svg>
        </label>
      </div>
    </div>
  </main>
);

/* ---------- right toolbar ---------- */

const w = "#c9cdd6";
const lb = "#6fb1dc";
const globe = (
  <>
    <circle cx="6" cy="6" r="5.500" fill="#4f9fd2" />
    <path d="M2 4Q5 1 7 3T4 7ZM7 7L10 6L9 10Z" fill="#c9e6f5" />
  </>
);
const railA: ReactNode[] = [
  <path d="M1 11V1H11L1 1M2 8V2H8Z" fill="#aab0bd" stroke={w} strokeWidth=".8" />,
  <><path d="M1 1V11H12" stroke={w} strokeDasharray="2 1" /><path d="M2 9L10 2M2 2L8 5L2 8Z" stroke={w} fill="#8e95a5" /></>,
  <path d="M3 1Q9 1 9 6M3 4Q6 4 6 8M3 1V9M9 8L11 11" stroke={w} />,
  <path d="M3 11V1L10 4L3 7" stroke={w} fill="#8e95a5" />,
  <><path d="M1 1H6V11H1ZM5 3H9V7H5Z" fill={w} /><path d="M6 6H12V12H6Z" fill="#6b7282" stroke={w} /><path d="M7 8H11M7 10H11" stroke={w} /></>,
  <>{globe}<path d="M7 7H12V12H7Z" fill="#eef0f4" stroke="#30343f" /><path d="M9.500 7V12M7 9.500H12" stroke="#30343f" strokeWidth=".7" /></>,
  <>{globe}<path d="M2 6H10M6 2V10M3 3L9 9M9 3L3 9" stroke="#d5ecf8" strokeWidth=".7" /></>,
  <><Mark x={5} y={5} r={1.5} c={w} /><path d="M8 7H11V10H8Z" fill={lb} /></>,
  <><Mark x={4} y={5} r={1.5} c={w} /><path d="M7 11L9 6L11 11M8 9.500H10" stroke={w} /></>,
  <><Mark x={4} y={4} r={1.5} c={w} /><path d="M5 3L11 8L8.500 8.500L10 11L8 11L7 9L5.500 10Z" fill="#fff" /></>,
  <><Mark x={4} y={4} r={1.5} c={w} /><circle cx="8" cy="7" r="2" stroke={w} /><path d="M9.500 8.500L12 11" stroke={w} /></>,
  <><path d="M2 1V11" stroke={w} /><path d="M4 3H10V8L5 8ZM4 8L9 3" stroke={w} fill="#6b7282" /></>,
  <path d="M1 2H8Q11 2 11 5T8 8H4M5 1V11M2 2V6" stroke={lb} strokeWidth="1.200" />,
];
const railB: ReactNode = <><path d="M2 11V4L4 1L6 5M1 5H7" stroke={w} strokeWidth="1.300" /><path d="M5 2L11 8L8.500 8.500L10 11L8 11L7 9L5.500 10Z" fill="#fff" /></>;
const railC: ReactNode[] = [
  <path d="M1 4H8Q11 4 11 7T8 10H5M4 1V7M1 4L4 7" stroke={lb} strokeWidth="1.100" strokeDasharray="3 1" />,
  <><circle cx="4" cy="4" r="3" fill={w} /><path d="M6 7H10Q12 9 9 11H5" stroke={lb} strokeDasharray="2 1" /></>,
  <><Mark x={4} y={4} r={1.5} c={w} /><path d="M6 7H10Q12 9 9 11H5" stroke={lb} strokeDasharray="2 1" /></>,
];
const railD: ReactNode[] = [
  <><path d="M2 1V10H12" stroke={w} strokeDasharray="3 1" /><path d="M5 5H8V8" stroke={w} /></>,
  <path d="M1 4L4 1L6 4M3 3V11H11V3L4 10" stroke={w} strokeDasharray="3 1" />,
  <><path d="M1 1V11H12" stroke={w} strokeDasharray="2 1" /><path d="M3 9L8 3M5 5L11 9" stroke={lb} /></>,
  <><path d="M1 6L8 1M4 10L11 4" stroke={w} strokeDasharray="3 1" /><path d="M3 11H12" stroke={lb} /></>,
  <><circle cx="5.500" cy="5.500" r="4.800" stroke={w} /><path d="M3 3L8 8" stroke={w} /><circle cx="9" cy="9" r="2.500" fill="#e3c38b" /></>,
  <><path d="M0 8L5 3L9 1M4 10L2 5" stroke={w} strokeWidth="1.200" /><circle cx="8.500" cy="8" r="3" fill="#e9dcc0" stroke="#98876a" /></>,
  <><path d="M1 10Q2 3 9 1" stroke={w} strokeDasharray="3 1" /><path d="M6 4H12V12H6Z" fill="#e9f1f8" /><path d="M7 6H11M7 9H11" stroke="#3b86c4" strokeWidth="1.300" /></>,
];
const railE: ReactNode[] = [
  railB,
  <><path d="M1 1H6V4H1ZM4 4V9M2 6H7V8H2ZM7 1H9V5H7Z" fill={w} stroke={w} strokeWidth=".6" /><path d="M6 6H11V11H6Z" fill="#30343f" stroke={w} /><path d="M8.500 6V11M6 8.500H11" stroke={w} strokeWidth=".7" /></>,
  <><path d="M3 12V6M1 4H7M4 1V7" stroke={w} strokeWidth="1.500" /><path d="M8 7H11V10H8Z" fill={lb} /></>,
];

function Rail({ icons, className }: { icons: ReactNode[]; className: string }) {
  return (
    <div className={`flex shrink-0 flex-col ${className}`}>
      {icons.map((d, i) => (
        <button key={i} aria-label={`Survey tool ${i + 1}`} className="flex min-h-0 flex-1 items-center justify-center">
          <Icon>{d}</Icon>
        </button>
      ))}
    </div>
  );
}

const Grip = () => <div className="mx-[3px] mt-px mb-[3px] h-[2px] shrink-0 border-t-2 border-dotted border-[#7c8392]" />;
const Bar = () => <div className="my-px h-[2px] shrink-0 bg-[#b9bec9]" />;

const RightToolbar = () => (
  <aside className="flex w-6 shrink-0 flex-col items-start bg-[#3c4257] pl-1">
    <div className="flex w-[15px] flex-col bg-[#353a4c]">
      <Grip />
      <Rail icons={railA} className="h-[198px]" />
      <Bar />
      <Rail icons={[railB]} className="h-4" />
      <Bar />
      <Rail icons={railC} className="h-[47px]" />
      <Bar />
      <Rail icons={railD} className="h-[107px]" />
    </div>
    <div className="mt-px flex w-[15px] flex-col border-y border-[#2b303e] bg-[#353a4c]">
      <Grip />
      <Rail icons={railE} className="h-[47px]" />
    </div>
  </aside>
);

/* ---------- status bar ---------- */

function Cell({ label, className, on, children }: { label: string; className: string; on?: boolean; children: ReactNode }) {
  return (
    <button aria-label={label} className={`flex h-4 shrink-0 items-center justify-center ${on ? "bg-[#5b93cf]" : "bg-[#3c4154]"} ${className}`}>
      {children}
    </button>
  );
}

const Drop = ({ className = "w-3" }: { className?: string }) => (
  <Cell label="Options" className={className}><Caret /></Cell>
);

const scaleMan = (extra: ReactNode) => (
  <>
    <path d="M6 1L7.500 5L10.500 11H8L6 8L4 11H1.500L4.500 5Z" fill="#e9ebef" />
    {extra}
  </>
);

const StatusBar = () => (
  <footer className="flex h-[21px] shrink-0 items-center bg-[#1f2531] pr-[3px] pb-px text-[#e9ebef]">
    <nav className="flex h-full items-center pl-[3px]">
      <a href="#" className="flex h-4 w-[53px] items-center justify-center bg-[#2d3444] font-bold">Model</a>
      <a href="#" className="flex w-[30px] items-center justify-center text-[#c3c7d0]">Layout1</a>
      <button aria-label="New layout" className="ml-[14px] text-[12px] leading-none text-[#c3c7d0]">+</button>
    </nav>
    <div className="flex flex-1 justify-end">
      <Cell label="Coordinates" className="mr-[2px] w-[127px]">4805.4904, 4034.8665, 0.0000</Cell>
      <Cell label="Model space" className="w-[34px]">MODEL</Cell>
      <Cell label="Grid" className="w-5"><Icon><path d="M0 3H12M0 6H12M0 9H12M3 0V12M6 0V12M9 0V12" stroke="#d9dce1" /></Icon></Cell>
      <Cell label="Snap" className="w-[14px]"><Icon><path d="M1 2H12M1 6H12M1 10H12" stroke="#d9dce1" strokeWidth="1.400" strokeDasharray="1.400 2" /></Icon></Cell>
      <Drop className="mr-px w-[13px]" />
      <Cell label="Ortho" className="w-[17px]"><Icon><path d="M2 0V10H12M2 6H6V10" stroke="#d9dce1" /></Icon></Cell>
      <Cell label="Polar" on className="w-4"><Icon><circle cx="6" cy="6" r="4.500" stroke="#fff" strokeWidth="1.200" /><path d="M6 6H12M6 6L10 1" stroke="#fff" /></Icon></Cell>
      <Drop />
      <Cell label="Isodraft" className="w-[15px]"><Icon><path d="M2 1L9 11" stroke="#d9dce1" /><path d="M7 0V5" stroke="#c25656" /></Icon></Cell>
      <Drop />
      <Cell label="Object snap tracking" className="w-[15px]"><Icon><path d="M9 1L1 10H12" stroke="#d9dce1" strokeWidth="1.200" /></Icon></Cell>
      <Cell label="Object snap" className="w-[18px]"><Icon><path d="M2 3H10V11H2Z" stroke="#d9dce1" /><path d="M0 1H4V5H0Z" fill="#3c4154" stroke="#d79a6a" /></Icon></Cell>
      <Drop className="mr-px w-[10px]" />
      <Cell label="Annotation visibility" on className="w-[17px]"><Icon>{scaleMan(<circle cx="9.500" cy="2.500" r="1.800" stroke="#fff" />)}</Icon></Cell>
      <Cell label="Auto scale" className="w-4"><Icon>{scaleMan(<path d="M9 1L11 4M11 1L9 4" stroke="#e9ebef" />)}</Icon></Cell>
      <Cell label="Annotation scale" className="w-[18px]"><Icon>{scaleMan(null)}</Icon></Cell>
      <Cell label="Scale list" className="w-[43px] gap-[3px]">1" = 40'<Caret /></Cell>
      <Cell label="Workspace switching" className="w-[18px]"><Gear /></Cell>
      <Drop className="w-[11px]" />
      <Cell label="Annotation monitor" className="mr-[2px] w-[17px]"><Icon><path d="M6 0V12M0 6H12" stroke="#e9ebef" strokeWidth="1.400" /></Icon></Cell>
      <Cell label="Elevation source" className="w-4"><Icon><path d="M2 5Q6-2 10 5Z" fill="#7f8695" /><path d="M1 5L6 3L11 5V8L6 10L1 8Z" fill="#5aa7e0" /><path d="M2 9L6 11L10 9" stroke="#c3c7d0" /></Icon></Cell>
      <Cell label="Elevation" className="w-9">3.5000</Cell>
      <Cell label="Isolate" on className="w-[17px]"><Icon><path d="M1 1H5V5H1Z" stroke="#fff" /><circle cx="9" cy="5" r="2" stroke="#fff" /><path d="M4 11L6 7L8 11Z" stroke="#fff" /></Icon></Cell>
      <Cell label="Select" className="w-[17px]"><Icon><path d="M3 3H11V11H5L3 9Z" fill="#f4f5f7" /><path d="M0 1H4M2 0V4" stroke="#d9a56a" /></Icon></Cell>
      <Cell label="Profile check" className="w-[10px]"><Icon className="h-3 w-[10px]"><path d="M1 11V1M1 11H5V4L11 1" stroke="#8c2240" strokeWidth="1.300" /><path d="M1 11V6" stroke="#25309a" strokeWidth="1.500" /></Icon></Cell>
      <Cell label="Layer tool" className="w-[17px]"><Icon><path d="M1 2H6V7H1ZM5 4H9V8H5Z" fill="#6aa9dc" /><circle cx="3" cy="8" r="2" fill="#e0c04a" /><path d="M5 9L7 11L11 5" stroke="#3fae58" strokeWidth="1.600" /></Icon></Cell>
      <Cell label="Performance" className="mr-[2px] w-[17px]"><Icon><path d="M1 1H10V9H1Z" fill="#f4f5f7" /><path d="M2 7L5 4L7 6L9 3" stroke="#555b6b" /><path d="M5 12L8.500 5L12 12Z" fill="#d98a4f" /></Icon></Cell>
      <Cell label="Clean screen" className="w-[18px]"><Icon><path d="M.5 2H11.500V10.500H.5Z" stroke="#d9dce1" /><path d="M3 8L4.500 6.500M7.500 5L9 4" stroke="#d9dce1" strokeWidth="1.500" /></Icon></Cell>
      <Cell label="Customization" className="w-4"><Icon><path d="M0 2H12M0 6H12M0 10H12" stroke="#e9ebef" strokeWidth="1.400" /></Icon></Cell>
    </div>
  </footer>
);

export default function App() {
  return (
    <div className="flex h-screen min-h-[620px] flex-col overflow-hidden border-t-2 border-b-2 border-t-[#3f65a3] border-b-[#3a4154] bg-[#1f2632] font-['Open_Sans','Noto_Sans',sans-serif] text-[8px] leading-[12px] text-[#d9dce1]">
      <Header />
      <Ribbon />
      <FileTabs />
      <div className="h-[2px] shrink-0 bg-[#3f4557]" />
      <div className="flex min-h-0 flex-1 border-l-2 border-[#213a78] bg-[#3c4257] pl-[2px]">
        <Toolspace />
        <Canvas />
        <RightToolbar />
      </div>
      <StatusBar />
    </div>
  );
}
